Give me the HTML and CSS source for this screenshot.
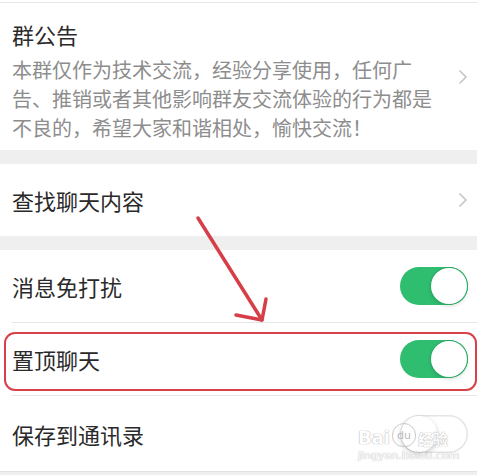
FILE: index.html
```html
<!DOCTYPE html>
<html lang="zh-CN">
<head>
    <meta charset="UTF-8">
    <meta name="viewport" content="width=device-width, initial-scale=1.0">
    <title>聊天信息</title>
    <link rel="stylesheet" href="styles.css">
</head>
<body>
    <div class="page">
        <div class="top-edge"></div>

        <!-- 群公告 -->
        <section class="group notice">
            <div class="notice-text">
                <h2 class="item-title">群公告</h2>
                <p class="notice-desc">本群仅作为技术交流，经验分享使用，任何广告、推销或者其他影响群友交流体验的行为都是不良的，希望大家和谐相处，愉快交流！</p>
            </div>
            <svg class="chevron" viewBox="0 0 10 16"><path d="M1.5 1.5 L8 8 L1.5 14.5"/></svg>
        </section>

        <!-- 查找聊天内容 -->
        <section class="group">
            <div class="row">
                <div class="row-body">
                    <span class="item-title">查找聊天内容</span>
                    <svg class="chevron" viewBox="0 0 10 16"><path d="M1.5 1.5 L8 8 L1.5 14.5"/></svg>
                </div>
            </div>
        </section>

        <!-- 开关 -->
        <section class="group">
            <div class="row">
                <div class="row-body">
                    <span class="item-title">消息免打扰</span>
                    <span class="switch on"><span class="knob"></span></span>
                </div>
            </div>
            <div class="row">
                <div class="row-body">
                    <span class="item-title">置顶聊天</span>
                    <span class="switch on"><span class="knob"></span></span>
                </div>
            </div>
            <div class="row row-last">
                <div class="row-body">
                    <span class="item-title">保存到通讯录</span>
                    <span class="switch"><span class="knob"></span></span>
                </div>
            </div>
        </section>

        <!-- 标注 -->
        <div class="mark-box"></div>
        <svg class="mark-arrow" viewBox="0 0 477 475">
            <path d="M198 218 L262 320"/>
            <path d="M236 315 L262 320 L266 299"/>
        </svg>

        <!-- 水印 -->
        <div class="watermark">
            <div class="wm-logo">
                <span class="wm-bai">Bai</span>
                <span class="wm-paw">du</span>
                <span class="wm-jy">经验</span>
            </div>
            <div class="wm-url">jingyan.baidu.com</div>
        </div>
    </div>
</body>
</html>
```

FILE: styles.css
```css
/* 基础样式 */
body {
    margin: 0;
    padding: 0;
    background: #efefef;
    font-family: "Noto Sans CJK SC", "Noto Sans", sans-serif;
    color: #2a2a2a;
    overflow: hidden;
}

.page {
    position: relative;
    width: 477px;
    height: 475px;
}

.top-edge {
    height: 2px;
    background: #fff;
    border-bottom: 1px solid #e6e6e6;
}

/* 分组 */
.group {
    background: #fff;
    margin-bottom: 14px;
}

.item-title {
    margin: 0;
    font-size: 22px;
    font-weight: normal;
    line-height: 30px;
    color: #2a2a2a;
}

/* 群公告 */
.notice {
    display: flex;
    align-items: center;
    padding: 16px 9px 8px 12px;
    height: 123px;
}

.notice-text {
    width: 432px;
}

.notice-desc {
    margin: 6px 0 0;
    font-size: 20px;
    line-height: 29px;
    color: #8d8d8d;
}

.chevron {
    width: 10px;
    height: 16px;
    margin-left: auto;
    fill: none;
    stroke: #c6c6c6;
    stroke-width: 1.6;
}

.notice .chevron {
    margin-top: -8px;
}

/* 列表行 */
.row {
    padding-left: 12px;
}

.row + .row .row-body {
    border-top: 1px solid #e6e6e6;
}

.row-body {
    display: flex;
    align-items: center;
    justify-content: space-between;
    height: 72px;
    padding-right: 9px;
}

.row-last .row-body {
    height: 75px;
}

.group:last-of-type {
    border-bottom: 1px solid #e2e2e2;
}

/* 开关 */
.switch {
    position: relative;
    width: 68px;
    height: 38px;
    border-radius: 19px;
    background: #fff;
    box-shadow: inset 0 0 0 1.5px #e4e4e4;
}

.switch .knob {
    position: absolute;
    top: 1px;
    left: 1px;
    width: 36px;
    height: 36px;
    border-radius: 50%;
    background: #fff;
    box-shadow: 0 2px 5px rgba(0,0,0,0.22);
}

.switch.on {
    background: #2fbd6f;
    box-shadow: none;
}

.switch.on .knob {
    left: 31px;
    box-shadow: 0 0 0 1px #2aa864, 0 2px 4px rgba(0,0,0,0.15);
}

/* 红色标注 */
.mark-box {
    position: absolute;
    left: 4px;
    top: 332px;
    width: 469px;
    height: 55px;
    border: 2.5px solid #d8404a;
    border-radius: 11px;
}

.mark-arrow {
    position: absolute;
    left: 0;
    top: 0;
    width: 477px;
    height: 475px;
    fill: none;
    stroke: #d63e48;
    stroke-width: 3.5;
    stroke-linecap: round;
    stroke-linejoin: round;
}

/* 水印 */
.watermark {
    position: absolute;
    left: 358px;
    top: 419px;
    font-family: "DejaVu Sans", "Noto Sans CJK SC", sans-serif;
    color: #fff;
    opacity: 0.85;
}

.wm-logo {
    display: flex;
    align-items: flex-end;
    height: 28px;
}

.wm-bai {
    font-size: 18px;
    font-weight: bold;
    line-height: 18px;
    text-shadow: 0 0 1px #a5a5a5, 0 0 1px #a5a5a5;
}

.wm-paw {
    width: 22px;
    height: 22px;
    margin: 0 2px;
    border-radius: 50% 50% 45% 45%;
    border: 1.5px solid #c0c0c0;
    font-size: 11px;
    line-height: 24px;
    text-align: center;
    color: #b0b0b0;
}

.wm-jy {
    font-family: "Noto Sans CJK SC", sans-serif;
    font-size: 15px;
    font-weight: bold;
    line-height: 17px;
    text-shadow: 0 0 1px #a5a5a5, 0 0 1px #a5a5a5;
}

.wm-url {
    font-size: 11px;
    line-height: 13px;
    margin-top: 2px;
    text-shadow: 0 0 1px #b0b0b0, 0 0 1px #b0b0b0;
}
```
